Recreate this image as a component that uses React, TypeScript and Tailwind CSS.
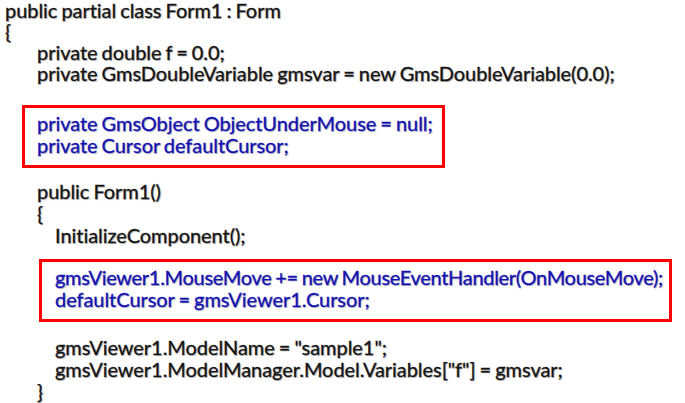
import React from "react";

function Line({ children, className = "" }: { children: React.ReactNode; className?: string }) {
  return <div className={`h-[22px] leading-[22px] whitespace-pre ${className}`}>{children}</div>;
}

export default function App() {
  return (
    <div
      className="w-[685px] h-[403px] bg-white overflow-hidden text-[20px] tracking-[-0.05px] [word-spacing:-1px] text-[#141414] [text-shadow:1px_1px_1px_rgba(0,0,0,0.3)] [-webkit-text-stroke:0.3px_currentColor]"
      style={{ fontFamily: "Lato, 'Open Sans', sans-serif" }}
    >
      <div className="pl-[5px]">
        <div className="h-[21px] leading-[21px] whitespace-pre">public partial class Form1 : Form</div>
        <div className="h-[21px] leading-[21px] whitespace-pre">{"{"}</div>
        <div className="pl-[32px]">
          <div className="h-[21px] leading-[21px] whitespace-pre">private double f = 0.0;</div>
          <div className="h-[21px] leading-[21px] whitespace-pre">private GmsDoubleVariable gmsvar = new GmsDoubleVariable(0.0);</div>
        </div>
      </div>

      <div className="ml-[22px] mt-[21px] w-[423px] border-[3px] border-[#ff0000] pl-[12px] pt-[4px] pb-[9px] text-[#1212b4]">
        <Line>private GmsObject ObjectUnderMouse = null;</Line>
        <Line>private Cursor defaultCursor;</Line>
      </div>

      <div className="pl-[37px] mt-[12px]">
        <Line>public Form1()</Line>
        <Line>{"{"}</Line>
        <Line className="pl-[18px]">InitializeComponent();</Line>
      </div>

      <div className="ml-[39px] mt-[13px] w-[633px] border-[3px] border-[#ff0000] pl-[13px] pt-[4px] pb-[9px] text-[#1212b4]">
        <Line className="tracking-[-0.3px]">gmsViewer1.MouseMove += new MouseEventHandler(OnMouseMove);</Line>
        <Line>defaultCursor = gmsViewer1.Cursor;</Line>
      </div>

      <div className="pl-[37px] mt-[14px]">
        <Line className="pl-[18px]">gmsViewer1.ModelName = "sample1";</Line>
        <Line className="pl-[18px]">gmsViewer1.ModelManager.Model.Variables["f"] = gmsvar;</Line>
        <Line>{"}"}</Line>
      </div>
    </div>
  );
}
